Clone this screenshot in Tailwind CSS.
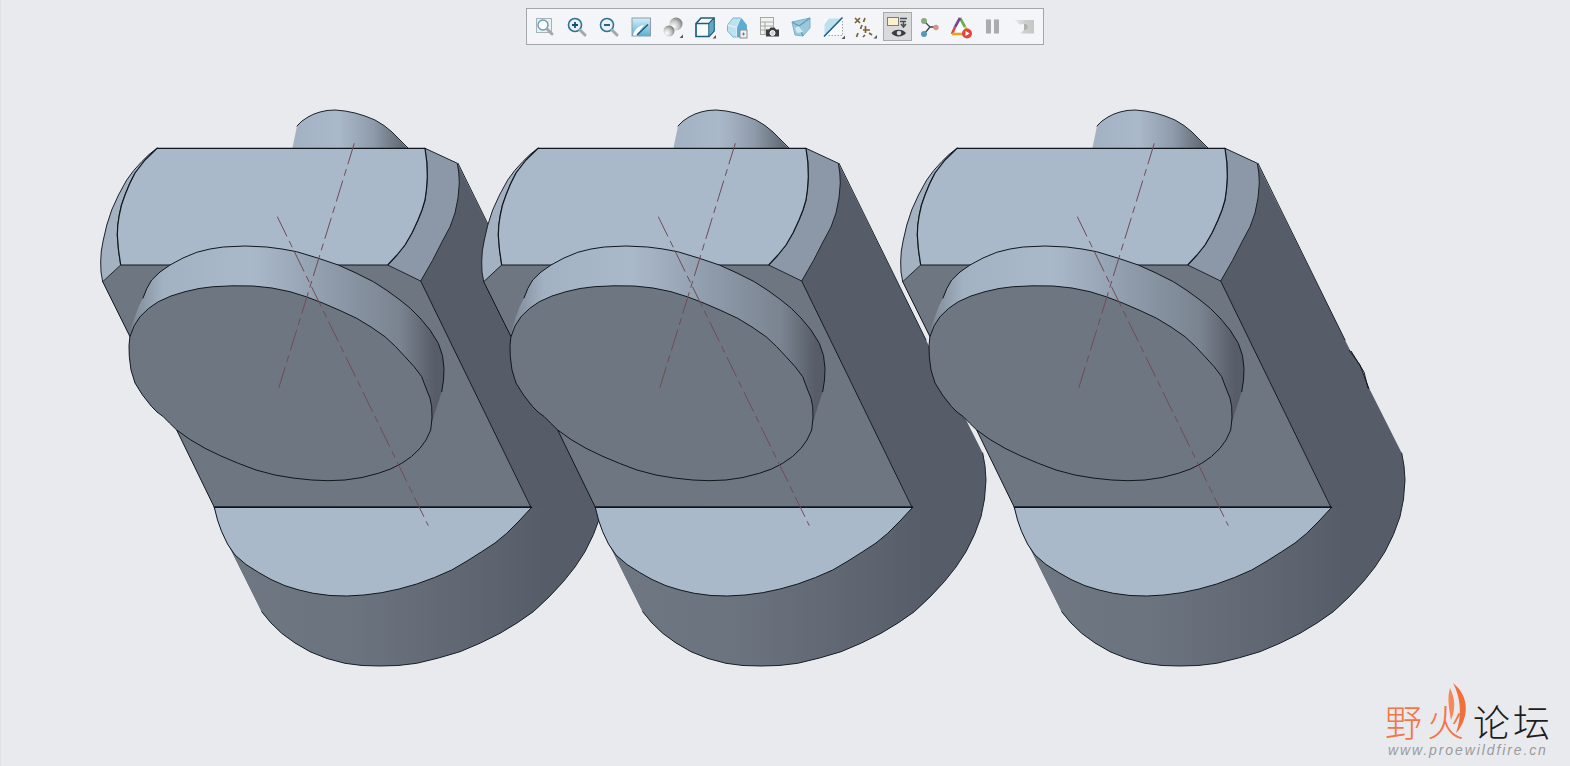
<!DOCTYPE html>
<html lang="zh">
<head>
<meta charset="utf-8">
<title>Model</title>
<script src="https://cdn.jsdelivr.net/npm/@tailwindcss/browser@4"></script>
</head>
<body class="m-0 overflow-hidden bg-[#e8eaee]">
<main class="relative h-[766px] w-[1570px] overflow-hidden border-l border-[#dfe2e6] bg-[#e8eaee]">

<svg class="absolute left-[-1px] top-0 block" width="1570" height="766" viewBox="0 0 1570 766">
  <defs>
    <linearGradient id="pin" gradientUnits="userSpaceOnUse" x1="292" y1="130" x2="408" y2="130">
      <stop offset="0" stop-color="#a3b2c3"/><stop offset=".4" stop-color="#aab9ca"/><stop offset=".7" stop-color="#8f9bab"/><stop offset="1" stop-color="#596069"/>
    </linearGradient>
    <linearGradient id="rim" gradientUnits="userSpaceOnUse" x1="132" y1="300" x2="444" y2="300">
      <stop offset="0" stop-color="#7f8a97"/><stop offset=".1" stop-color="#a3b2c3"/><stop offset=".38" stop-color="#aab9ca"/><stop offset=".62" stop-color="#909dad"/><stop offset=".86" stop-color="#7a8390"/><stop offset=".97" stop-color="#565d68"/><stop offset="1" stop-color="#565d68"/>
    </linearGradient>
    <linearGradient id="lower" gradientUnits="userSpaceOnUse" x1="230" y1="600" x2="545" y2="600">
      <stop offset="0" stop-color="#6f7782"/><stop offset=".4" stop-color="#6b737e"/><stop offset=".8" stop-color="#5e6570"/><stop offset="1" stop-color="#565d68"/>
    </linearGradient>
    <g id="part" stroke-linejoin="round" stroke-linecap="round">
      <!-- rear pin -->
      <path d="M292 150 L297 126 L302 121 L308 117 L314 114 L320 112 L327 110.5 L335 110 L345 111 L355 113 L365 116 L375 120 L384 125.5 L392 132 L409 150 Z" fill="url(#pin)"/>
      <path d="M297 126 L302 121 L308 117 L314 114 L320 112 L327 110.5 L335 110 L345 111 L355 113 L365 116 L375 120 L384 125.5 L392 132 L408 148" fill="none" stroke="#1b2229" stroke-width="1"/>
      <!-- dark side -->
      <path d="M457.3 163.3 L545 340 L570 390 L601.7 453 L604 466 L605 480 L603.5 499 L600 516.7 L593.5 534.5 L585 551.7 L575 567 L563.3 581.7 L549 597 L533.3 611.7 L517 623 L500 633.3 L480.5 643 L460 651.7 L438.5 658 L416.7 663.3 L398 665.5 L380 666 L362 665.5 L345 663.3 L327 658.5 L310 651.7 L295 643 L281.7 633.3 L271 623 L261.7 611.7 L222 532 L214 507 L531 507 L420.7 281 Z" fill="#565d68"/>
      <!-- lower cylinder -->
      <path d="M214 507 L560 507 L560 585 L549 597 L533.3 611.7 L517 623 L500 633.3 L480.5 643 L460 651.7 L438.5 658 L416.7 663.3 L398 665.5 L380 666 L362 665.5 L345 663.3 L327 658.5 L310 651.7 L295 643 L281.7 633.3 L271 623 L261.7 611.7 L222 532 Z" fill="url(#lower)"/>
      <path d="M458 163.3 L545 340 M601.7 453 L604 466 L605 480 L603.5 499 L600 516.7 L593.5 534.5 L585 551.7 L575 567 L563.3 581.7 L549 597 L533.3 611.7 L517 623 L500 633.3 L480.5 643 L460 651.7 L438.5 658 L416.7 663.3 L398 665.5 L380 666 L362 665.5 L345 663.3 L327 658.5 L310 651.7 L295 643 L281.7 633.3 L271 623 L261.7 611.7" fill="none" stroke="#1b2229" stroke-width="1"/>
      <!-- large flat face -->
      <path d="M102.7 281.7 L120.7 265 L387.7 265 L420.7 281 L531 507.3 L214.3 507.3 L176.7 430 L130 336.7 Z" fill="#6e7681"/>
      <!-- top light face and chamfers -->
      <path d="M157 148.3 L149 154.5 L141.7 161.7 L133.7 170.5 L126.7 180 L118.5 195 L111.7 210 L106.8 225 L103.3 240 L101.3 251 L100.7 262 L101 272 L102.7 281.7 L120.7 265 L118.5 250 L117.3 235 L117.8 225 L119.3 215 L121.5 205 L125 195 L129.5 184 L135 173 L145 160 Z" fill="#a3b1c1" stroke="#1b2229" stroke-width="1"/>
      <path d="M425 148.3 L457.3 163.3 L458.8 173 L459.3 183 L458 198 L455 213 L450 227 L443 240 L432.5 260.5 L420.7 281 L387.7 265 L397 255 L405 245 L412 233 L418 220 L422 210 L425 200 L426.5 189 L427.3 176.7 L426.8 162 Z" fill="#8c98a7" stroke="#1b2229" stroke-width="1"/>
      <path d="M157 148.3 L425 148.3 L426.8 162 L427.3 176.7 L426.5 189 L425 200 L422 210 L418 220 L412 233 L405 245 L397 255 L387.7 265 L120.7 265 L118.5 250 L117.3 235 L117.8 225 L119.3 215 L121.5 205 L125 195 L129.5 184 L135 173 L145 160 Z" fill="#a9b9ca" stroke="#10171d" stroke-width="1.2"/>
      <path d="M102.7 281.7 L130 336.7 M176.7 430 L214.3 507.3 L531 507.3 L420.7 281" fill="none" stroke="#10171d" stroke-width="1"/>
      <!-- light half moon -->
      <path d="M214.3 507.3 L217.5 520 L221.7 531.7 L227.5 544 L235 555 L246 564.5 L258.3 572.3 L271 579.5 L285 585.7 L299 590 L313.3 593.3 L330 595.5 L346.7 596 L364 595 L381.7 592.7 L399 589 L416.7 584 L434.5 577.5 L451.7 570 L467 561 L481.7 551.7 L495 543 L506.7 533.3 L519 521 L531.7 507.3 Z" fill="#a9b9ca" stroke="#10171d" stroke-width="1"/>
      <path d="M214.3 507.3 L531.7 507.3" stroke="#10171d" stroke-width="1.2" fill="none"/>
      <!-- disk rim -->
      <path d="M130 336.7 L132 326 L135 316.7 L138.5 307 L143 298 L146.8 288.5 L151.7 280 L160 272 L170 265 L183 258 L196.7 252.3 L210 249 L223.3 247 L245 246 L266.7 247 L282 249 L296.7 251.7 L317.5 258 L338.3 265 L356 273 L373.3 281.7 L387 290.5 L400 300 L410.5 308.5 L420 318 L430 330 L438.3 343.3 L442.5 355.5 L444 368.3 L443.5 380 L441.7 391.7 L431.7 423 L420 400 L300 320 Z" fill="url(#rim)"/>
      <path d="M143 298 L146.8 288.5 L151.7 280 L160 272 L170 265 L183 258 L196.7 252.3 L210 249 L223.3 247 L245 246 L266.7 247 L282 249 L296.7 251.7 L317.5 258 L338.3 265 L356 273 L373.3 281.7 L387 290.5 L400 300 L410.5 308.5 L420 318 L430 330 L438.3 343.3 L442.5 355.5 L444 368.3 L443.5 380 L441.7 391.7" fill="none" stroke="#10171d" stroke-width="1"/>
      <!-- disk face -->
      <path d="M130 336.7 L134 326 L140 316.7 L148.5 308.5 L158.3 301.7 L171 296 L185 291.7 L199 288.5 L213.3 286.7 L233 285.8 L253.3 286 L272 288 L290 291.7 L307 297 L323.3 303.3 L340 310.5 L356.7 318.3 L371 327 L385 336.7 L395.5 346.5 L405 356.7 L414 366.5 L421.7 376.7 L426.7 390 L430 398 L431.7 406.7 L432 418 L430.7 430 L426 440 L420 448.3 L411.5 456.5 L401.7 463.3 L390.5 469 L378.3 473.3 L362 477.5 L345 480 L328 480.7 L311.7 480 L293 478 L275 475 L256 470 L238.3 463.3 L221 456 L205 448.3 L190 439.5 L176.7 430 L169.5 423 L163.3 416.7 L157 412 L151.7 406.7 L142.5 395 L135 383 L131 370 L129.3 356.7 L129 346 Z" fill="#6e7681" stroke="#10171d" stroke-width="1"/>
      <!-- axes -->
      <path d="M354.3 143.3 L277.3 392.7" fill="none" stroke="#6f4c55" stroke-width="1" stroke-dasharray="22 5 7 5" stroke-linecap="butt"/>
      <path d="M277.3 216.7 L428.3 525.7" fill="none" stroke="#6f4c55" stroke-width="1" stroke-dasharray="22 5 7 5" stroke-linecap="butt"/>
    </g>
  </defs>
  <use href="#part"/>
  <use href="#part" x="381"/>
  <use href="#part" x="800"/>
  <path d="M1349 350 L1360 365 L1369 389 L1345 345 Z" fill="#565d68"/>
  <path d="M1349 350 L1360 365 L1369 389 M1351 351 L1364 372 L1368 388" fill="none" stroke="#10171d" stroke-width="1"/>
  <!-- flame of the logo -->
  <path d="M1453 683 C1467 694 1470 712 1460 728 C1459 730 1458 731 1456 733 C1462 716 1461 698 1453 683 Z" fill="#f36f38"/>
  <path d="M1450 688 C1455 698 1456 709 1451 720 C1449 708 1447 698 1450 688 Z" fill="#f58a58"/>
</svg>

<section class="absolute left-[525px] top-2 flex h-[37px] w-[518px] items-center border border-[#a4a7aa] bg-[#f3f5f8] pl-[2px]">
  <div class="flex h-8 w-8 items-center justify-center">
    <svg width="24" height="24" viewBox="0 0 24 24"><rect x="3.5" y="3.5" width="15" height="14" fill="#e9f0f3" stroke="#a6b3b9"/><circle cx="10" cy="10" r="5" fill="#fff" stroke="#6c9ab2" stroke-width="1.4"/><path d="M14 14 L19 19" stroke="#a5a9ac" stroke-width="3" stroke-linecap="round"/></svg>
  </div>
  <div class="flex h-8 w-8 items-center justify-center">
    <svg width="24" height="24" viewBox="0 0 24 24"><circle cx="10" cy="10" r="6.5" fill="#e8f1f5" stroke="#2f7295" stroke-width="1.6"/><path d="M7 10 H13 M10 7 V13" stroke="#17506e" stroke-width="1.8"/><path d="M15 15 L20 20" stroke="#a5a9ac" stroke-width="3" stroke-linecap="round"/></svg>
  </div>
  <div class="flex h-8 w-8 items-center justify-center">
    <svg width="24" height="24" viewBox="0 0 24 24"><circle cx="10" cy="10" r="6.5" fill="#e8f1f5" stroke="#2f7295" stroke-width="1.6"/><path d="M7 10 H13" stroke="#17506e" stroke-width="1.8"/><path d="M15 15 L20 20" stroke="#a5a9ac" stroke-width="3" stroke-linecap="round"/></svg>
  </div>
  <div class="flex h-8 w-8 items-center justify-center">
    <svg width="24" height="24" viewBox="0 0 24 24"><defs><linearGradient id="rp" x1="0" y1="0" x2="0" y2="1"><stop offset="0" stop-color="#d5eef7"/><stop offset="1" stop-color="#58b2d6"/></linearGradient></defs><rect x="3" y="3" width="18.5" height="18" fill="url(#rp)" stroke="#8e9da5"/><path d="M4 20.5 C5 15 9 11 15 10 C12 14 9 18 8 20.5 Z" fill="#fff"/><path d="M8 20 L19 9.5" stroke="#1f5a7c" stroke-width="1.6"/></svg>
  </div>
  <div class="relative flex h-8 w-8 items-center justify-center">
    <svg width="24" height="24" viewBox="0 0 24 24"><defs><radialGradient id="sp" cx=".3" cy=".7" r=".9"><stop offset="0" stop-color="#fff"/><stop offset=".45" stop-color="#c9c9c9"/><stop offset="1" stop-color="#5f5f5f"/></radialGradient></defs><circle cx="15" cy="9" r="6.5" fill="url(#sp)"/><circle cx="8" cy="16" r="5.5" fill="url(#sp)"/><path d="M22 23 H18.5 L22 19.5 Z" fill="#55595d"/></svg>
  </div>
  <div class="flex h-8 w-8 items-center justify-center">
    <svg width="24" height="24" viewBox="0 0 24 24"><path d="M3 8.5 L8 3 H21 V16 L16 21.5 H3 Z" fill="#f8fbfc" stroke="#1d5f7e" stroke-width="1.7"/><path d="M3 8.5 H16 V21.5 M16 8.5 L21 3" fill="none" stroke="#1d5f7e" stroke-width="1.5"/><path d="M16.5 9 L20.5 4.5 V15.8 L16.5 20.5 Z" fill="#5fa8c6"/><path d="M23 23.5 H19.5 L23 20 Z" fill="#55595d"/></svg>
  </div>
  <div class="flex h-8 w-8 items-center justify-center">
    <svg width="24" height="24" viewBox="0 0 24 24"><path d="M2.5 10 L8 3 H16 L21.5 10 V17 L15 22 H8 L2.5 16 Z" fill="#bfe2f0" stroke="#79b6d2"/><path d="M2.5 10 L12 12.5 L16 3 M12 12.5 V22" fill="none" stroke="#e6f4fa" stroke-width="1.2"/><path d="M16 3 L21.5 10 V17 L15 22 H12 V12.5 Z" fill="#5dadd2"/><rect x="15" y="15" width="7" height="8" fill="#eef1f2" stroke="#8a8f93"/><path d="M17 19 H20 M18.5 17.5 V20.5" stroke="#666" stroke-width=".8"/></svg>
  </div>
  <div class="flex h-8 w-8 items-center justify-center">
    <svg width="24" height="24" viewBox="0 0 24 24"><rect x="3.5" y="2.5" width="13" height="17" fill="#f2f2f0" stroke="#a8a8a4"/><path d="M3.5 7 H16.5 M3.5 11 H16.5 M3.5 15 H16.5 M8 7 V19.5" stroke="#a8a8a4"/><path d="M9 21.5 V14.5 H12 L13.5 12.5 H17.5 L19 14.5 H22 V21.5 Z" fill="#3a3d40"/><circle cx="15.5" cy="18" r="2.5" fill="#cfd2d4" stroke="#fff"/></svg>
  </div>
  <div class="flex h-8 w-8 items-center justify-center">
    <svg width="24" height="24" viewBox="0 0 24 24"><path d="M3 7 L21 3 L21 13 L14 21 L6 20 Z" fill="#9cc8dc" stroke="#7eb1c9"/><path d="M3 7 L10 11 L21 3 M10 11 L14 21" fill="none" stroke="#5c9dbb" stroke-width="1.2"/><path d="M6 13 L10 11 L14 17 L8 18 Z" fill="#cfe8f2"/></svg>
  </div>
  <div class="flex h-8 w-8 items-center justify-center">
    <svg width="24" height="24" viewBox="0 0 24 24"><path d="M3 3.5 H21.5 V20.5 H3 Z" fill="#f7fafb"/><path d="M8 3.5 H21 L3.5 21 V9 Z" fill="#bde0ee"/><path d="M3 21.5 L21.5 2.5" stroke="#1f5a7c" stroke-width="1.5"/><path d="M21.5 6 V20.5 H7" fill="none" stroke="#9aa4a9" stroke-dasharray="1.5 1.5"/><path d="M24 24 H20.5 L24 20.5 Z" fill="#55595d"/></svg>
  </div>
  <div class="flex h-8 w-8 items-center justify-center">
    <svg width="24" height="24" viewBox="0 0 24 24"><g stroke="#7a6238" stroke-width="1.7" fill="none"><path d="M2 3 L7 8 M7 3 L2 8"/><path d="M12 3 L10.5 7"/><path d="M9 10 L7.5 14 M5 18 L3.5 22"/><path d="M12.5 11 V18 M10 15 H17"/><path d="M12 20 L10 22 M16 18 L19 20"/></g><path d="M24 23.5 H20.5 L24 20 Z" fill="#55595d"/></svg>
  </div>
  <div class="flex h-[29px] w-[29px] mx-[1.5px] items-center justify-center border border-[#a9a9a9] bg-[#d9dadc]">
    <svg width="24" height="24" viewBox="0 0 24 24"><rect x="2.5" y="2.5" width="11" height="8" fill="#fbf1d0" stroke="#7d7d7d"/><path d="M15 3.5 H22 M15 6.5 H21 M18.5 6.5 V11 M16 9 L18.5 12 L21 9" fill="none" stroke="#4a4e51" stroke-width="1.5"/><path d="M6.5 18 C9 13.5 18 13.5 21 18 C18 22.5 9 22.5 6.5 18 Z" fill="#3a3d40"/><circle cx="14" cy="18" r="2.3" fill="#d9dadc"/></svg>
  </div>
  <div class="flex h-8 w-8 items-center justify-center">
    <svg width="24" height="24" viewBox="0 0 24 24"><path d="M7 6 L13 12 L7 19 M13 12 H19" fill="none" stroke="#3a4248" stroke-width="1.3"/><circle cx="7" cy="6" r="3" fill="#88ac80"/><circle cx="19" cy="12.5" r="2.7" fill="#d8938c"/><circle cx="7" cy="19" r="3" fill="#5597bd"/></svg>
  </div>
  <div class="flex h-8 w-8 items-center justify-center">
    <svg width="24" height="24" viewBox="0 0 24 24"><path d="M11 4 L3.5 18.5 H18 Z" fill="#fff"/><path d="M11 3 L16 12" stroke="#62b346" stroke-width="2.6" fill="none"/><path d="M11 3 L6 12" stroke="#7a3f9d" stroke-width="2.6" fill="none"/><path d="M6 12 L3 19" stroke="#d24a3c" stroke-width="2.6" fill="none"/><path d="M3 19 H15" stroke="#e9a22a" stroke-width="2.6" fill="none"/><path d="M16 12 L19 16" stroke="#e9c62a" stroke-width="2.6" fill="none"/><circle cx="18" cy="18.5" r="5" fill="#e1443e"/><path d="M16.5 16 L20.7 18.5 L16.5 21 Z" fill="#fff"/></svg>
  </div>
  <div class="flex h-8 w-8 items-center justify-center">
    <svg width="24" height="24" viewBox="0 0 24 24"><rect x="5" y="4.5" width="5" height="14" fill="#a9abad"/><rect x="13" y="4.5" width="5" height="14" fill="#a9abad"/></svg>
  </div>
  <div class="flex h-8 w-8 items-center justify-center">
    <svg width="24" height="24" viewBox="0 0 24 24"><defs><linearGradient id="gr" x1="0" y1="0" x2="1" y2="0"><stop offset="0" stop-color="#ececec"/><stop offset=".5" stop-color="#cfcfcf"/><stop offset="1" stop-color="#c6c6c6"/></linearGradient></defs><path d="M1.5 5 H21 V18.5 H7 L11 15 V9 L6.5 9.5 Z" fill="url(#gr)"/><path d="M11 9 C16 8 16 15 11 15 Z" fill="#b0b0b0"/></svg>
  </div>
</section>

<aside class="absolute left-[1384px] top-[698px] w-[180px] font-['Noto_Sans_CJK_SC',sans-serif]">
  <div class="flex h-[46px] items-center text-[37px] font-light leading-none">
    <span class="w-[42px] text-[#f37648]">野</span>
    <span class="w-[46px] text-[#f37648]">火</span>
    <span class="w-[40px] text-[#1d1d1d]">论</span>
    <span class="text-[#1d1d1d]">坛</span>
  </div>
  <p class="ml-[3px] mt-[-2px] whitespace-nowrap font-['Liberation_Sans',sans-serif] text-[14px] italic leading-4 tracking-[1.9px] text-[#9b9b9b]">www.proewildfire.cn</p>
</aside>
</main>
</body>
</html>
